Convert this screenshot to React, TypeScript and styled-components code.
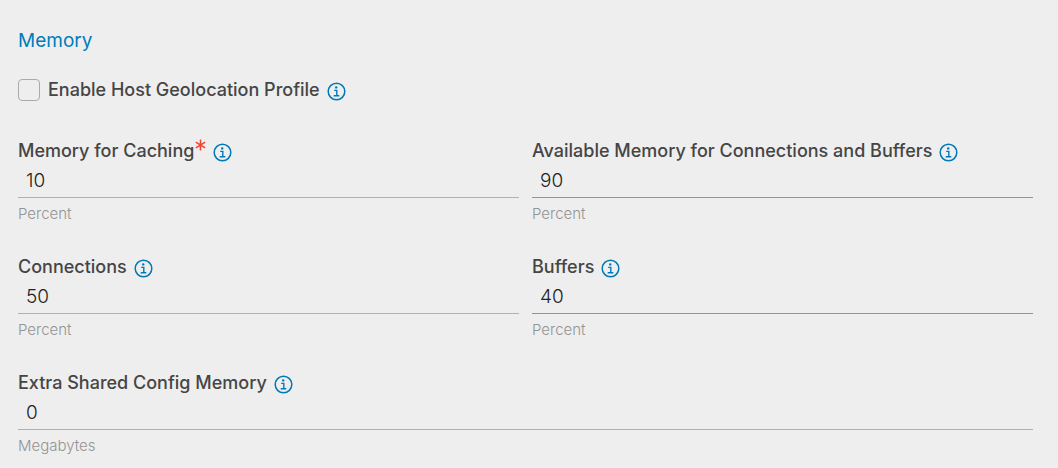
import React, { useId, useState } from "react";
import styled, { createGlobalStyle } from "styled-components";

const GlobalStyle = createGlobalStyle`
  *, *::before, *::after { box-sizing: border-box; }
  body {
    margin: 0;
    background: #eeeeee;
    color: #454545;
    font-family: Inter, "Open Sans", sans-serif;
  }
`;

const Form = styled.form`
  padding: 29px 25px 6px 18px;
`;

const Title = styled.h2`
  margin: 0;
  color: #007cbb;
  font-size: 19px;
  font-weight: 400;
  line-height: 24px;
`;

const CheckRow = styled.div`
  display: flex;
  align-items: center;
  height: 24px;
  margin-top: 25px;
`;

const Checkbox = styled.input`
  appearance: none;
  width: 22px;
  height: 22px;
  margin: 0 8px 0 0;
  border: 1px solid #aaaaaa;
  border-radius: 4px;
  background: transparent;

  &:checked {
    border-color: #0079b8;
    background: #0079b8;
    box-shadow: inset 0 0 0 4px #eeeeee;
  }
`;

const Label = styled.label`
  color: #454545;
  font-size: 18px;
  font-weight: 500;
  line-height: 24px;
`;

const Fields = styled.div`
  display: grid;
  grid-template-columns: 1fr 1fr;
  gap: 29px 13px;
  margin-top: 37px;
`;

const FieldBox = styled.div<{ $wide?: boolean }>`
  display: flex;
  flex-direction: column;
  grid-column: ${(p) => (p.$wide ? "1 / -1" : "auto")};
`;

const LabelRow = styled.div`
  display: flex;
  align-items: center;
  height: 24px;
`;

const RequiredMark = styled.svg`
  width: 11px;
  height: 12px;
  margin: 0 0 12px 1px;
`;

const InfoButton = styled.button`
  display: flex;
  margin: 2px 0 0 7px;
  padding: 0;
  border: 0;
  border-radius: 50%;
  background: transparent;
  color: #0079b8;
  cursor: pointer;
`;

const TextInput = styled.input<{ $strong?: boolean }>`
  width: 100%;
  height: 35px;
  padding: 1px 8px 0;
  border: 0;
  border-bottom: 1px solid ${(p) => (p.$strong ? "#919595" : "#b0b1b1")};
  border-radius: 0;
  background: transparent;
  color: #222222;
  font: 300 19px/24px Inter, "Open Sans", sans-serif;
  outline: none;

  &:focus { border-bottom-color: #0079b8; }
`;

const Unit = styled.span`
  margin-top: 4px;
  color: #949494;
  font-size: 15px;
  font-weight: 300;
  line-height: 24px;
`;

function Info({ topic }: { topic: string }) {
  return (
    <InfoButton type="button" aria-label={`About ${topic}`}>
      <svg width="19" height="19" viewBox="0 0 19 19" fill="none" stroke="currentColor">
        <circle cx="9.5" cy="9.5" r="8.3" strokeWidth="1.5" />
        <circle cx="9.2" cy="5.4" r="1.2" fill="currentColor" stroke="none" />
        <path d="M7.2 8.4H9.8V13.6M6.7 13.7H12.3" strokeWidth="1.4" />
      </svg>
    </InfoButton>
  );
}

type FieldProps = {
  label: string;
  initial: string;
  unit: string;
  required?: boolean;
  strong?: boolean;
  wide?: boolean;
};

function Field({ label, initial, unit, required, strong, wide }: FieldProps) {
  const id = useId();
  const [value, setValue] = useState(initial);
  return (
    <FieldBox $wide={wide}>
      <LabelRow>
        <Label htmlFor={id}>{label}</Label>
        {required && (
          <RequiredMark viewBox="0 0 11 12" stroke="#f5412f" strokeWidth="1.5" aria-hidden="true">
            <path d="M5.5 .5V11.5M.8 3.2L10.2 8.8M10.2 3.2L.8 8.8" />
          </RequiredMark>
        )}
        <Info topic={label} />
      </LabelRow>
      <TextInput
        id={id}
        type="text"
        inputMode="numeric"
        value={value}
        required={required}
        $strong={strong}
        aria-describedby={`${id}-unit`}
        onChange={(e) => setValue(e.target.value)}
      />
      <Unit id={`${id}-unit`}>{unit}</Unit>
    </FieldBox>
  );
}

export default function App() {
  return (
    <>
      <GlobalStyle />
      <Form>
        <Title>Memory</Title>
        <CheckRow>
          <Checkbox type="checkbox" id="geo-profile" />
          <Label htmlFor="geo-profile">Enable Host Geolocation Profile</Label>
          <Info topic="Enable Host Geolocation Profile" />
        </CheckRow>
        <Fields>
          <Field label="Memory for Caching" initial="10" unit="Percent" required />
          <Field label="Available Memory for Connections and Buffers" initial="90" unit="Percent" strong />
          <Field label="Connections" initial="50" unit="Percent" />
          <Field label="Buffers" initial="40" unit="Percent" strong />
          <Field label="Extra Shared Config Memory" initial="0" unit="Megabytes" wide />
        </Fields>
      </Form>
    </>
  );
}
